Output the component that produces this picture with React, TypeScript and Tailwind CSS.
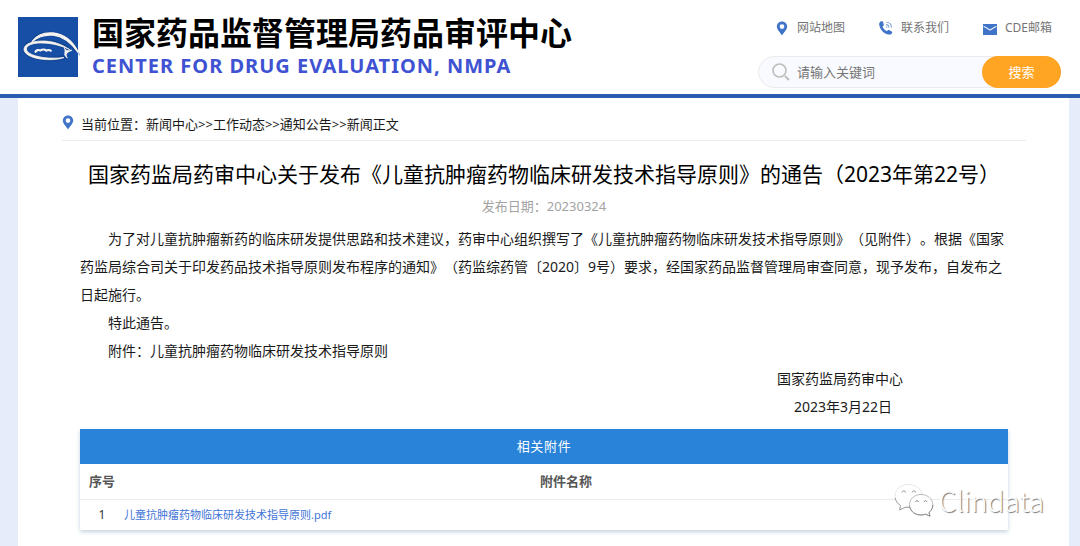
import React from "react";

function PinIcon({ className }: { className: string }) {
  return (
    <svg viewBox="0 0 12 16" className={className} aria-hidden="true">
      <path
        fillRule="evenodd"
        fill="#3f74c8"
        d="M6 .5C2.9.5.5 2.9.5 5.9c0 3.600 3.500 6 5.500 9.600 2-3.600 5.500-6 5.500-9.600C11.500 2.900 9.100.5 6 .5zm0 2.900a2.500 2.500 0 1 1 0 5 2.500 2.500 0 0 1 0-5z"
      />
    </svg>
  );
}

function PhoneIcon() {
  return (
    <svg viewBox="0 0 14 14" className="size-[14px]" aria-hidden="true">
      <path
        fill="#3f74c8"
        d="M.5 1.700C1.200.6 2.300.1 3.200.3c.5.100.8.5.900 1l.7 2.300c.1.500 0 .9-.4 1.200l-.9.8c.8 2 2.300 3.600 4.300 4.600l.9-.9c.4-.4.900-.4 1.400-.2l2.500 1.300c.7.4.9 1 .5 1.700-.7 1.200-1.900 1.700-3.200 1.500C4.800 12.900.9 8.600.2 3.700.1 3 .1 2.300.5 1.700z"
      />
      <path fill="none" stroke="#7fa3dc" strokeWidth="1.100" d="M7.200 3.600c1.500.1 2.700 1.300 2.800 2.900M7.500 1.200c2.700.1 4.900 2.300 5 5.200" />
      <path fill="none" stroke="#7fa3dc" strokeWidth="1" d="M7 5.700c.6.100.9.500 1 1" />
    </svg>
  );
}

function MailIcon() {
  return (
    <svg viewBox="0 0 14 11" className="mt-[2px] h-[11px] w-[14px]" aria-hidden="true">
      <path fill="#3f74c8" d="M0 0h14v11H0z" />
      <path fill="none" stroke="#dfe9f8" strokeWidth="1.200" d="M.6 2.200 7 6l6.400-3.800" />
    </svg>
  );
}

function Logo() {
  return (
    <svg viewBox="0 0 62 60" className="h-[60px] w-[62px] shrink-0" role="img" aria-label="CDE">
      <path fill="#164fa5" d="M0 0h60v60H0z" />
      <g fill="none" strokeLinecap="round" strokeLinejoin="round">
        <path
          stroke="#0d3a80"
          strokeWidth="4.500"
          opacity=".55"
          d="M14.500 24.500C19 18 27 16 35 17c10 1.300 18 7.500 23 15.500M49 31C41 26 32 24.500 24 24.500c-10 0-17 3-17 7.500 0 6 12 10 25 10 5 0 9-.5 13-1.500"
        />
        <path
          fill="#f7f3ee"
          stroke="#f7f3ee"
          strokeWidth="1.300"
          d="M14.200 24.500C19 17.800 26.500 15.300 35 16c12 1.300 20.500 9.500 25.300 19.500C53.500 26.200 45.500 19.300 35 18.200c-8.500-.9-15 1.600-20.800 6.300z"
        />
        <path
          fill="#f7f3ee"
          stroke="#f7f3ee"
          strokeWidth=".8"
          fillRule="evenodd"
          d="M51.500 32.500C43 26.500 33.500 24 24.500 24 14 24 6 27.300 6 32.200c0 6.300 12.500 10.700 26.500 10.500 5.500-.1 10-.8 13.500-2.200-4 .5-8.500.8-13 .6C20 40.700 8.500 37 8.500 32c0-3.900 6.500-6.200 15.500-6 9.500.1 18.500 2.300 27.500 6.500z"
        />
        <path
          fill="#f7f3ee"
          stroke="#f7f3ee"
          strokeWidth=".8"
          d="M46.500 31.500c1.500 2.300 3.500 2.700 7.500 1.700-3 1.200-5.400 2.300-5.700 4.200-.2 1.300.3 2.300 1 3.400-2-1.200-2.800-2.600-2.500-4.500.3-1.700.5-3-.3-4.800z"
        />
        <path stroke="#f7f3ee" strokeWidth="2.200" d="M17.500 34.800c.8-1.800 3.200-2.300 5-1.300 1.500-1.300 4.300-1.300 5.800.1 1.300-.9 3.500-.8 4.500.2" />
        <path stroke="#8ea9d6" strokeWidth="1" d="M60.500 36 62 38.500" />
      </g>
    </svg>
  );
}

function SearchIcon() {
  return (
    <svg viewBox="0 0 18 18" className="size-[18px] shrink-0" fill="none" stroke="#bdbdbd" aria-hidden="true">
      <circle cx="7.500" cy="7.500" r="6.500" strokeWidth="1.600" />
      <path strokeWidth="2" d="m13 13 4 4" />
    </svg>
  );
}

function ChatBubbles() {
  return (
    <svg viewBox="0 0 40 34" className="h-[34px] w-[40px]" strokeLinejoin="round" aria-hidden="true">
      <path fill="#fff" stroke="#dcdcdc" strokeWidth=".7" d="M6.500 22.500C3 20 1 17 1 13.500 1 6.500 7 1.500 14.500 1.500S27.500 6 28 11.500c-7 .5-12 5-12 11.500l-4 1-5.500 3z" />
      <path fill="none" stroke="#999" strokeWidth=".9" d="M1.200 15c.5 3 2.300 5.600 5.300 7.500L5.500 27l5.500-2.800 5 .3" />
      <path fill="#fff" stroke="#aaa" strokeWidth=".8" d="M27 11.500c-6.500 0-11.500 4.500-11.500 10.300S20.500 32 27 32c1.700 0 3.300-.3 4.700-.8l4.300 2-1-3.700c2.400-2 3.800-4.500 3.800-7.500 0-6-5.300-10.500-11.800-10.500z" />
      <path fill="none" stroke="#888" strokeWidth=".9" d="M15.700 23.500C16.700 28.500 21.300 32 27 32c1.700 0 3.300-.3 4.700-.8l4.300 2-1-3.700c2.500-2 3.800-4.700 3.800-7.500M8 9.500c.3-2.200 3.300-2.200 3.600 0M18.200 9.500c.3-2.200 3.300-2.200 3.600 0M21.500 19c.3-1.800 2.700-1.800 3 0M30 19c.3-1.800 2.700-1.800 3 0" />
    </svg>
  );
}

const crumbs = ["新闻中心", "工作动态", "通知公告", "新闻正文"];

export default function App() {
  return (
    <div className="flex min-h-screen flex-col bg-[#e6ecf9] font-['Noto_Sans','Noto_Sans_CJK_SC',sans-serif] text-sm text-[#1a1a1a] [text-spacing-trim:space-all]">
      <header className="flex items-start justify-between border-b-4 border-[#2a5caf] bg-white pr-[19px] pb-[6px] pl-[18px]">
        <div className="flex gap-3 pt-[17px]">
          <Logo />
          <div className="whitespace-nowrap">
            <div className="-mt-1 text-[32px] leading-[40px] font-bold text-black">国家药品监督管理局药品审评中心</div>
            <div className="text-[20px] leading-[26px] font-bold tracking-wider text-[#3e52d2]">CENTER FOR DRUG EVALUATION, NMPA</div>
          </div>
        </div>
        <div className="pt-[18px]">
          <nav className="flex justify-end gap-[34px] pr-[9px] text-xs leading-5 whitespace-nowrap text-[#757575]">
            <a href="#map" className="flex items-center gap-[9px]">
              <PinIcon className="h-[15px] w-[12px]" />
              网站地图
            </a>
            <a href="#contact" className="flex items-center gap-[8px]">
              <PhoneIcon />
              联系我们
            </a>
            <a href="#mail" className="flex items-center gap-[8px]">
              <MailIcon />
              CDE邮箱
            </a>
          </nav>
          <form className="mt-[18px] flex h-8 w-[303px] items-center rounded-full border border-[#ebebeb] bg-[#f9faff] pl-[13px]" onSubmit={(e) => e.preventDefault()}>
            <SearchIcon />
            <input
              type="text"
              aria-label="请输入关键词"
              placeholder="请输入关键词"
              className="ml-[7px] min-w-0 flex-1 bg-transparent text-[13px] outline-none placeholder:text-[#757575]"
            />
            <button type="submit" className="-my-px -mr-px h-8 w-[79px] rounded-full bg-[#ffa423] text-[13px] text-white">
              搜索
            </button>
          </form>
        </div>
      </header>

      <main className="mr-[11px] ml-[18px] flex-1 bg-white pr-[43px] pb-4 pl-11">
        <nav aria-label="当前位置" className="flex items-center gap-[7px] border-b border-[#ebebeb] pt-4 pb-[6px] text-[13px] leading-5 text-[#1a1a1a]">
          <PinIcon className="mb-1 h-[15px] w-[12px]" />
          <div>
            当前位置：
            {crumbs.map((name, i) => (
              <React.Fragment key={name}>
                {i > 0 && ">>"}
                <a href="#news">{name}</a>
              </React.Fragment>
            ))}
          </div>
        </nav>

        <article className="px-[18px]">
          <h1 className="pt-[17px] text-center text-[21px] leading-8 text-black">
            国家药监局药审中心关于发布《儿童抗肿瘤药物临床研发技术指导原则》的通告（2023年第22号）
          </h1>
          <p className="mt-[6px] text-center text-[13px] leading-5 text-[#a3a3a3]">发布日期：20230324</p>
          <div className="mt-[9px] indent-[28px] leading-7">
            <p>
              为了对儿童抗肿瘤新药的临床研发提供思路和技术建议，药审中心组织撰写了《儿童抗肿瘤药物临床研发技术指导原则》（见附件）。根据《国家药监局综合司关于印发药品技术指导原则发布程序的通知》（药监综药管〔2020〕9号）要求，经国家药品监督管理局审查同意，现予发布，自发布之日起施行。
            </p>
            <p>特此通告。</p>
            <p>附件：儿童抗肿瘤药物临床研发技术指导原则</p>
          </div>
          <div className="pr-[105px] text-right leading-7">
            <p>国家药监局药审中心</p>
            <p className="pr-[11px]">2023年3月22日</p>
          </div>

          <section className="relative mt-2 shadow-[0_2px_4px_rgba(90,130,170,0.35)]">
            <table className="w-full table-fixed border-collapse">
              <caption className="h-[35px] bg-[#2983d8] text-[13px] leading-[35px] tracking-wider text-white">相关附件</caption>
              <thead>
                <tr className="h-[35px] border-b border-[#ebebeb] text-[13px] text-[#555]">
                  <th scope="col" className="w-11 p-0 font-bold">序号</th>
                  <th scope="col" className="p-0 font-bold">附件名称</th>
                </tr>
              </thead>
              <tbody>
                <tr className="h-[31px] text-[11px]">
                  <td className="p-0 text-center text-xs text-[#333]">1</td>
                  <td className="p-0">
                    <a href="#pdf" className="text-[#3f74d8]">儿童抗肿瘤药物临床研发技术指导原则.pdf</a>
                  </td>
                </tr>
              </tbody>
            </table>
            <div className="pointer-events-none absolute -right-9 bottom-3 flex items-center gap-[5px] font-['Noto_Sans_CJK_SC',sans-serif] text-[28px] leading-9 font-light text-white [text-shadow:1px_1px_1px_#777]">
              <ChatBubbles />
              Clindata
            </div>
          </section>
        </article>
      </main>
    </div>
  );
}
